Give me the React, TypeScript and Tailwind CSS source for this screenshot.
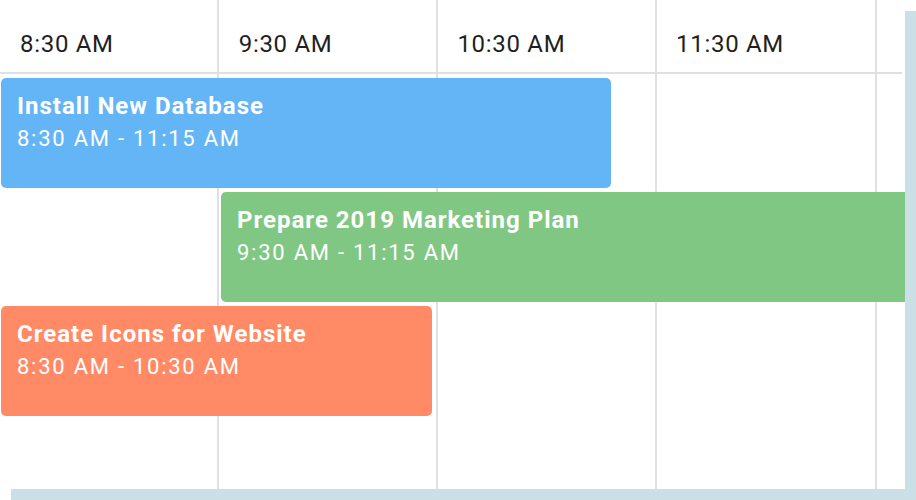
const hours = ['8:30 AM', '9:30 AM', '10:30 AM', '11:30 AM']
const colWidths = ['w-[219px]', 'w-[219px]', 'w-[219px]', 'w-[220px]']

const events = [
    { title: 'Install New Database', time: '8:30 AM - 11:15 AM', left: 1, width: 610, color: 'bg-[#64b5f6]' },
    { title: 'Prepare 2019 Marketing Plan', time: '9:30 AM - 11:15 AM', left: 221, width: 720, color: 'bg-[#81c784]' },
    { title: 'Create Icons for Website', time: '8:30 AM - 10:30 AM', left: 1, width: 431, color: 'bg-[#ff8a65]' },
]

export default function App() {
    return (
        <div className="bg-white w-[916px] h-[500px]" style={{ fontFamily: 'Roboto, "Noto Sans", sans-serif' }}>
            <div className="relative w-[905px] h-[489px] overflow-hidden bg-white shadow-[11px_11px_0_#cbe0e6]">
                {/* column lines */}
                <div className="flex h-full">
                    {hours.map((h, i) => (
                        <div key={h} className={`${colWidths[i]} shrink-0 h-full border-r-2 border-[#e0e0e0]`} />
                    ))}
                </div>

                <div className="absolute inset-0 flex flex-col">
                    <div className="flex h-[74px] w-[902px] border-b-2 border-[#e0e0e0] shrink-0">
                        {hours.map(h => (
                            <div key={h} className="w-[218.7px] shrink-0 pl-5 pt-[30px] text-[24px] leading-[28px] text-[#1f1f1f] tracking-[0.7px]">
                                {h}
                            </div>
                        ))}
                    </div>

                    <div className="flex flex-col gap-1 pt-1">
                        {events.map(e => (
                            <div
                                key={e.title}
                                className={`${e.color} h-[110px] shrink-0 rounded-[5px] pl-4 pt-[13px] text-white`}
                                style={{ marginLeft: e.left, width: e.width }}
                            >
                                <div className="text-[24px] leading-[30px] font-bold tracking-[1px]">{e.title}</div>
                                <div className="text-[22px] leading-[35px] tracking-[1.75px]">{e.time}</div>
                            </div>
                        ))}
                    </div>
                </div>
            </div>
        </div>
    )
}
